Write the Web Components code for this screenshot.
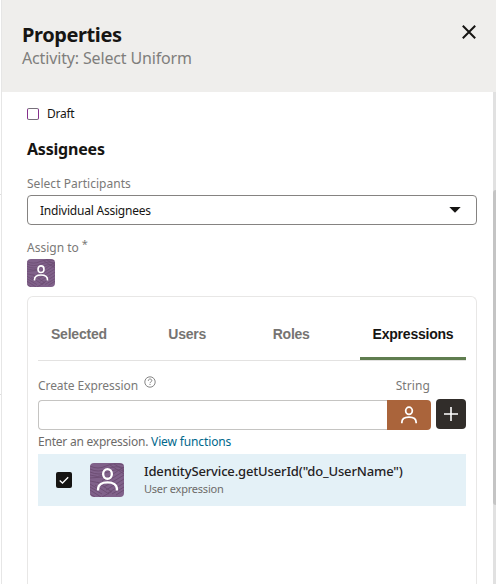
<!DOCTYPE html>
<html lang="en">
<head>
<meta charset="utf-8">
<title>Properties</title>
<style>
html,body{margin:0;height:584px;overflow:hidden;background:#fff}
body{font-family:"Noto Sans","Open Sans",sans-serif;font-size:12px;color:#161513}
</style>
</head>
<body>
<properties-panel></properties-panel>
<script>
function define(name, html) {
  customElements.define(name, class extends HTMLElement {
    constructor() {
      super();
      const t = document.createElement('template');
      t.innerHTML = '<style>*{box-sizing:border-box}</style>' + html;
      this.attachShadow({mode: 'open'}).append(t.content.cloneNode(true));
    }
  });
}

define('person-icon', `
<style>:host{display:block;color:#fff}svg{display:block;width:100%;height:100%}</style>
<svg viewBox="0 0 20 20" fill="none" stroke="currentColor" stroke-width="1.6"><ellipse cx="10" cy="6.2" rx="3" ry="3.3"/><path d="M3.5 17.5v-.8c0-2.9 2.5-4.7 6.5-4.7s6.5 1.8 6.5 4.7v.8"/></svg>`);

define('person-tile', `
<style>
:host{display:grid;place-items:center;width:var(--tile,28px);height:var(--tile,28px);border-radius:4px;overflow:hidden;background:#80628a;flex:none}
svg,person-icon{grid-area:1/1}
svg{width:100%;height:100%}
person-icon{width:var(--glyph,20px);height:var(--glyph,20px);margin-top:var(--lift,-1px);position:relative}
</style>
<svg viewBox="0 0 34 34" fill="none" stroke="#644569" stroke-width=".9" opacity=".75">
<path d="M0 3q8 4 16 0t18-1M0 6q8 4 17 0t17-1M0 9q9 4 18 0t16-1M0 12q8 3 14 0M0 15l13-1M0 18l10 2M0 21l10 6M0 24l12 7M0 27l11 7M0 31l5 3M12 18l22-14M13 21L34 8M14 24l20-12M16 27l18-11M18 30l16-10M22 31l12-7M26 32l8-5M5 22l14 9M7 19l15 10M20 2l14 9M24 1l10 6M12 34l9-5"/></svg>
<person-icon></person-icon>`);

define('panel-header', `
<style>
:host{display:flex;justify-content:space-between;height:92px;padding:23px 19px 0 20px;background:#efeeec;flex:none}
.t{font-size:20px;font-weight:700;line-height:24px;letter-spacing:-.4px}
.s{font-size:16px;line-height:24px;letter-spacing:-.15px;color:#7f7e7c;margin-top:-1px}
svg{width:16px;height:16px;margin-top:1px}
</style>
<div><div class="t"><slot name="title"></slot></div><div class="s"><slot></slot></div></div>
<svg viewBox="0 0 16 16" stroke="#161513" stroke-width="2" fill="none"><path d="M1.8 1.8l12.4 12.4M14.2 1.8L1.8 14.2"/></svg>`);

define('check-box', `
<style>
:host{display:flex;align-items:center;gap:8px}
i{width:12px;height:12px;border:1px solid #77707a;border-left-color:#85308c;border-right-color:#85308c;border-radius:2px;background:#fff;flex:none}
svg{display:none;width:16px;height:16px}
:host([checked]) i{display:none}:host([checked]) svg{display:block}
</style>
<i></i><svg viewBox="0 0 16 16"><rect width="16" height="16" rx="2" fill="#161513"/><path d="M3.7 8.4l2.8 2.6 5.7-5.8" fill="none" stroke="#fff" stroke-width="1.3"/></svg><slot></slot>`);

define('select-field', `
<style>
:host{display:block;color:#161513}
label{display:block;height:16px;line-height:16px;letter-spacing:.03px;color:#7a7977}
.b{display:flex;align-items:center;justify-content:space-between;height:30px;margin-top:3px;border:1px solid #858381;border-radius:4px;padding:0 15px 0 12px;letter-spacing:-.22px}
svg{width:12px;height:6px}
</style>
<label><slot name="label"></slot></label>
<div class="b"><span><slot></slot></span><svg viewBox="0 0 12 6"><path d="M.3 0h11.4L6 5.8z" fill="#161513"/></svg></div>`);

define('tab-bar', `
<style>
:host{display:flex;height:54px;border-bottom:1px solid #e3e2e1;font:700 14px/42px "Liberation Sans",Arial,sans-serif;letter-spacing:-.22px;color:#767472}
::slotted(span){flex:none;padding:6px 12.5px 0 13px;height:54px}
::slotted([active]){color:#161513;margin-left:auto;width:106px;padding:6px 0 0;text-align:center;height:53px;border-bottom:3px solid #5f7d4f;box-sizing:border-box}
</style><slot></slot>`);

define('expression-input', `
<style>
:host{display:block;color:#7a7977}
.l{display:flex;height:16px;line-height:16px}
.l>span:first-child{letter-spacing:-.07px}
.l svg{width:12px;height:12px;margin:-2px 0 0 6px}
.l .k{margin-left:auto;margin-right:36px;letter-spacing:.1px}
.r{display:flex;margin-top:5px}
.f{flex:1;height:30px;margin-top:1px;border:1px solid #c5c4c2;border-right:0;border-radius:4px 0 0 4px}
.p{display:grid;place-items:center;width:44px;height:30px;margin-top:1px;background:#aa643b;border-radius:0 4px 4px 0}
.p person-icon{width:22px;height:22px}
.a{width:30px;height:30px;margin-left:5px;border-radius:4px;background:#312d2a}
.a svg{display:block}
.h{height:17px;line-height:17px;margin-top:3px;letter-spacing:-.23px;white-space:pre;color:#6d6b69}
a{color:#00688c;letter-spacing:-.13px}
</style>
<div class="l"><span><slot name="label"></slot></span><svg viewBox="0 0 12 12" fill="none" stroke="#777" stroke-width=".9"><circle cx="6" cy="6" r="5.2"/><path d="M4.3 4.8c0-2.4 3.5-2.3 3.5-.2C7.8 5.9 6 5.8 6 7.2M6 8v1"/></svg><span class="k"><slot name="type"></slot></span></div>
<div class="r"><div class="f"></div><div class="p"><person-icon></person-icon></div><div class="a"><svg width="30" height="30" viewBox="0 0 30 30" stroke="#fff" stroke-width="1.6"><path d="M15 8v14M8 15h14"/></svg></div></div>
<div class="h"><slot name="hint"></slot> <a><slot name="link"></slot></a></div>`);

define('expression-row', `
<style>
:host{display:flex;align-items:center;height:52px;padding-left:18px;background:#e4f1f7}
person-tile{--tile:34px;--glyph:29px;--lift:-1px;margin:0 20px 0 18px}
.x{margin-top:-2px}
.t{font-size:13px;font-weight:500;line-height:18px;letter-spacing:-.15px;color:#24221f}
.s{font-size:11px;line-height:17px;letter-spacing:-.22px;color:#6d6b69}
</style>
<check-box checked></check-box><person-tile></person-tile>
<div class="x"><div class="t"><slot></slot></div><div class="s"><slot name="sub"></slot></div></div>`);

define('scroll-rail', `
<style>:host{display:block;width:3px;background:#e1e1e1;padding-top:98px}div{height:315px;background:#c4c4c4;border-radius:3px 0 0 3px}</style><div></div>`);

define('properties-panel', `
<style>
:host{display:grid;grid-template-columns:1px 1fr;height:584px}
.edge{display:flex;flex-direction:column;padding-top:194px;gap:199px}
.edge i{height:1px;background:#ddd}
.main{display:flex;flex-direction:column;border-left:1px solid #e6e6e6;min-width:0}
.body{display:flex;flex:1;min-height:0}
.c{flex:1;display:flex;flex-direction:column;padding:13px 16px 0 25px;min-width:0}
.c check-box{height:17px;letter-spacing:-.25px}
h2{margin:16px 0 0;font-size:16px;line-height:22px;letter-spacing:-.2px}
select-field{margin-top:16px}
.as{height:16px;line-height:16px;margin:15px 0 3px;color:#7a7977;letter-spacing:0}
.as sup{font-size:11px;line-height:0;vertical-align:4px;margin-left:3px}
.card{flex:1;margin-top:9px;border:1px solid #e8e7e6;border-bottom:0;border-radius:6px 6px 0 0;padding:10px 10px 0}
expression-input{margin-top:17px}
expression-row{margin-top:4px}
</style>
<div class="edge"><i></i><i></i></div>
<div class="main">
<panel-header><span slot="title">Properties</span>Activity: Select Uniform</panel-header>
<div class="body"><div class="c">
<check-box>Draft</check-box>
<h2>Assignees</h2>
<select-field><span slot="label">Select Participants</span>Individual Assignees</select-field>
<div class="as">Assign to<sup>*</sup></div>
<person-tile></person-tile>
<div class="card">
<tab-bar><span>Selected</span><span style="margin-left:36px">Users</span><span style="margin-left:41px">Roles</span><span active>Expressions</span></tab-bar>
<expression-input><span slot="label">Create Expression</span><span slot="type">String</span><span slot="hint">Enter an expression.</span><span slot="link">View functions</span></expression-input>
<expression-row>IdentityService.getUserId("do_UserName")<span slot="sub">User expression</span></expression-row>
</div>
</div><scroll-rail></scroll-rail></div>
</div>`);
</script>
</body>
</html>
